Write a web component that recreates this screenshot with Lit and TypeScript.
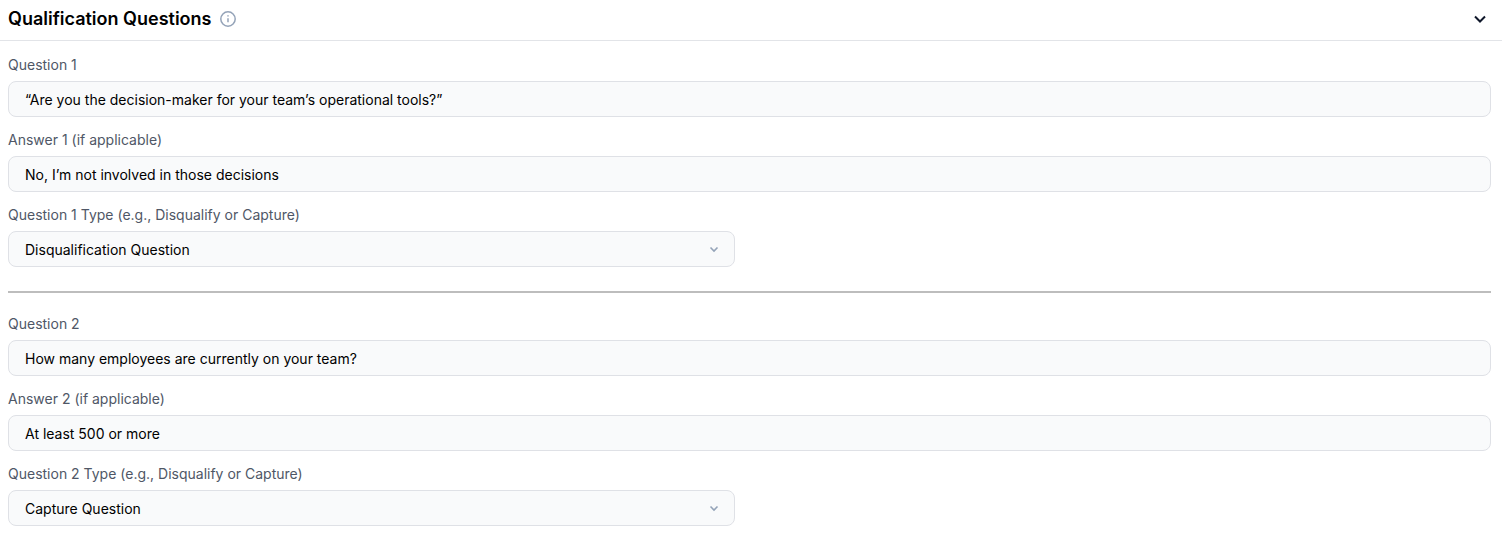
import { LitElement, html, css } from "lit";
import { customElement } from "lit/decorators.js";

const groups = [
  { n: 1, q: "“Are you the decision-maker for your team’s operational tools?”", a: "No, I’m not involved in those decisions", t: "Disqualification Question" },
  { n: 2, q: "How many employees are currently on your team?", a: "At least 500 or more", t: "Capture Question" },
];

@customElement("app-root")
export class AppRoot extends LitElement {
  static styles = css`
    :host { display: block; font-family: Inter, "Liberation Sans", sans-serif; background: #fff; height: 536px; overflow: hidden; }
    .header { display: flex; align-items: center; padding: 0 15px 3px 8px; box-sizing: border-box; border-bottom: 1px solid #e2e4e8; height: 41px; }
    .title { font-size: 18px; font-weight: 600; line-height: 36px; color: #000; }
    .info { margin-left: 9px; display: block; }
    .chev { margin-left: auto; display: block; }
    .body { padding: 14px 11px 0 8px; }
    .label { font-size: 14px; line-height: 20px; color: #4f5766; height: 20px; }
    .field { height: 36px; box-sizing: border-box; border: 1px solid #dfe1e6; border-radius: 8px; background: #f9fafb; margin-top: 6px; margin-bottom: 13px; padding: 0 16px; display: flex; align-items: center; font-size: 14px; color: #000; }
    .select { width: 727px; justify-content: space-between; margin-bottom: 0; padding-right: 14px; }
    hr { border: 0; height: 2px; background: #bdbdbd; margin: 24px 0 21px; }
  `;
  render() {
    return html`
      <div class="header">
        <span class="title">Qualification Questions</span>
        <svg class="info" width="16" height="16" viewBox="0 0 16 16" fill="none" stroke="#94a3b8" stroke-width="1.5"><circle cx="8" cy="8" r="7.2"/><path d="M8 7.2v4M8 4.2v1.3"/></svg>
        <svg class="chev" width="14" height="14" viewBox="0 0 14 14" fill="none" stroke="#0f172a" stroke-width="2"><path d="M2 4.5l5 5 5-5"/></svg>
      </div>
      <div class="body">
        ${groups.map((g, i) => html`
          ${i ? html`<hr />` : ""}
          <div class="label">Question ${g.n}</div>
          <div class="field">${g.q}</div>
          <div class="label">Answer ${g.n} (if applicable)</div>
          <div class="field">${g.a}</div>
          <div class="label">Question ${g.n} Type (e.g., Disqualify or Capture)</div>
          <div class="field select"><span>${g.t}</span>
            <svg width="12" height="12" viewBox="0 0 12 12" fill="none" stroke="#94a3b8" stroke-width="1.6"><path d="M2.5 4.5L6 8l3.5-3.5"/></svg>
          </div>
        `)}
      </div>
    `;
  }
}
